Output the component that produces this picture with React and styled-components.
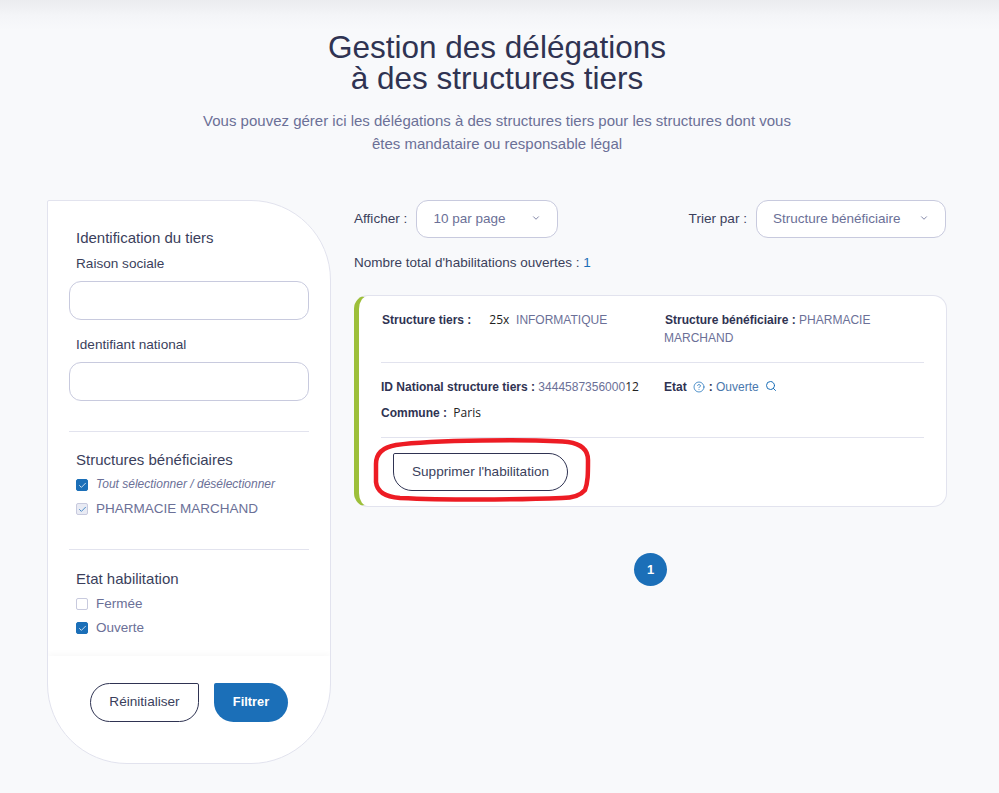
import React from "react"
import styled, { createGlobalStyle } from "styled-components"
import { Check, ChevronDown, CircleHelp, Search } from "lucide-react"

const GlobalStyle = createGlobalStyle`
  html, body {
    margin: 0;
    padding: 0;
    background: #f8f9fb;
  }
  body {
    font-family: "Liberation Sans", Arial, sans-serif;
    color: #2f3352;
  }
  * {
    box-sizing: border-box;
  }
`

const Page = styled.div`
  width: 999px;
  height: 793px;
  overflow: hidden;
  padding-top: 32px;
  background: linear-gradient(#ebecef 0, #f4f5f8 16px, #f8f9fb 30px);
`

const Header = styled.header`
  text-align: center;
  height: 168px;
  padding-right: 5px;
`

const Title = styled.h1`
  margin: 0;
  font-size: 31.5px;
  line-height: 31px;
  font-weight: 400;
  color: #2f3352;
`

const Subtitle = styled.p`
  margin: 15px auto 0;
  width: 620px;
  font-size: 15px;
  line-height: 23px;
  color: #6b7097;
`

const Content = styled.div`
  display: flex;
  align-items: flex-start;
  padding-left: 47px;
  gap: 23px;
`

const Sidebar = styled.aside`
  width: 284px;
  height: 564px;
  background: #fff;
  border: 1px solid #e2e3ee;
  border-radius: 2px 80px 80px 80px;
  display: flex;
  flex-direction: column;
  overflow: hidden;
`

const FilterBody = styled.div`
  flex: 1;
  padding: 28px 21px 0;
`

const FilterSection = styled.section`
  padding-bottom: ${(p) => p.$bottom}px;
  margin-bottom: ${(p) => p.$gap}px;
  border-bottom: ${(p) => (p.$last ? "none" : "1px solid #e2e3ee")};
`

const SectionTitle = styled.div`
  padding-left: 7px;
  margin-bottom: ${(p) => p.$after || 0}px;
  font-size: 15px;
  line-height: 18px;
  color: #3b3f5c;
`

const FieldLabel = styled.label`
  display: block;
  padding-left: 7px;
  margin: ${(p) => p.$top}px 0 8px;
  font-size: 13.6px;
  line-height: 18px;
  color: #3b3f5c;
`

const TextInput = styled.input`
  display: block;
  width: 240px;
  height: 39px;
  border: 1px solid #c8cade;
  border-radius: 12px;
  background: #fff;
  outline: none;
`

const CheckRow = styled.div`
  display: flex;
  align-items: center;
  gap: 8px;
  height: 24px;
  padding-left: 7px;
  font-size: ${(p) => (p.$italic ? "12px" : "13.5px")};
  font-style: ${(p) => (p.$italic ? "italic" : "normal")};
  color: #6b7097;
`

const Box = styled.span`
  width: 12px;
  height: 12px;
  margin-top: 2px;
  border-radius: 2px;
  display: inline-flex;
  align-items: center;
  justify-content: center;
  flex: none;
  background: ${(p) => (p.$state === "on" ? "#1b6fb8" : p.$state === "off" ? "#e9ebf4" : "#fff")};
  border: 1px solid ${(p) => (p.$state === "on" ? "#1b6fb8" : "#c8cade")};
  color: ${(p) => (p.$state === "on" ? "#fff" : "#1b6fb8")};
`

const SidebarFooter = styled.div`
  height: 107px;
  display: flex;
  justify-content: center;
  gap: 15px;
  padding-top: 27px;
  box-shadow: 0 -3px 5px rgba(40, 40, 60, 0.025);
`

const OutlineButton = styled.button`
  height: ${(p) => p.$height}px;
  width: ${(p) => p.$width}px;
  padding: 0 0 2px;
  background: #fff;
  border: 1px solid #2f3352;
  border-radius: ${(p) => p.$radius};
  font: 13.6px "Liberation Sans", Arial, sans-serif;
  color: #3b3f5c;
`

const PrimaryButton = styled.button`
  height: 39px;
  width: 74px;
  padding: 0 0 2px;
  background: #1b6fb8;
  border: none;
  border-radius: 2px 20px 20px 20px;
  font: bold 12.8px "Liberation Sans", Arial, sans-serif;
  color: #fff;
`

const Main = styled.main`
  width: 593px;
`

const Toolbar = styled.div`
  display: flex;
  justify-content: space-between;
  align-items: center;
  padding-right: 1px;
`

const ToolGroup = styled.div`
  display: flex;
  align-items: center;
  gap: 9px;
`

const ToolLabel = styled.span`
  margin-bottom: 2px;
  font-size: 13.6px;
  color: #3b3f5c;
`

const SelectBox = styled.div`
  width: ${(p) => p.$width}px;
  height: 38px;
  padding: 0 16px 2px 16px;
  display: flex;
  align-items: center;
  justify-content: space-between;
  background: #fff;
  border: 1px solid #c8cade;
  border-radius: 12px;
  font-size: 13.5px;
  color: #6b7097;
`

const Total = styled.div`
  margin: 16px 0 23px;
  font-size: 13.5px;
  line-height: 18px;
  color: #3b3f5c;

  b {
    font-weight: 400;
    color: #1b6fb8;
  }
`

const Card = styled.article`
  position: relative;
  height: 212px;
  background: #fff;
  border: 1px solid #e2e3ee;
  border-left: 5px solid #9dbf3a;
  border-radius: 14px;
  padding: 0 22px;
`

const CardRow = styled.div`
  display: grid;
  grid-template-columns: 283px 1fr;
  height: ${(p) => p.$height}px;
  padding-top: ${(p) => p.$top}px;
  border-bottom: 1px solid #e2e3ee;
  font-size: 12px;
  line-height: 18px;
  color: #6b7097;

  strong {
    color: #2f3352;
  }
`

const LeadLabel = styled.strong`
  margin-left: 1px;
`

const InfoLine = styled.div`
  margin-bottom: ${(p) => p.$bottom || 0}px;
`

const Patched = styled.span`
  margin-left: ${(p) => p.$left || 0}px;
  font-family: "Open Sans", sans-serif;
  color: #222;
`

const EtatValue = styled.span`
  color: #4a78ad;
`

const HelpIcon = styled(CircleHelp)`
  vertical-align: -2px;
  margin: 0 4px 0 6px;
  color: #1b6fb8;
`

const SearchIcon = styled(Search)`
  vertical-align: -1px;
  margin-left: 6px;
  color: #1b6fb8;
`

const CardActions = styled.div`
  padding: 15px 0 0 12px;
`

const RedMark = styled.svg`
  position: absolute;
  left: 13px;
  top: 142px;
  pointer-events: none;
`

const Pagination = styled.div`
  display: flex;
  justify-content: center;
  margin-top: 46px;
`

const PageDot = styled.span`
  width: 33px;
  height: 33px;
  border-radius: 50%;
  display: flex;
  align-items: center;
  justify-content: center;
  background: #1b6fb8;
  color: #fff;
  font-size: 13px;
  font-weight: 700;
`

const CheckItem = ({ state, italic, children }) => (
  <CheckRow $italic={italic}>
    <Box $state={state}>
      {state !== "empty" && <Check size={9} strokeWidth={2} />}
    </Box>
    {children}
  </CheckRow>
)

const App = () => {
  return (
    <Page>
      <GlobalStyle />
      <Header>
        <Title>
          Gestion des délégations
          <br />à des structures tiers
        </Title>
        <Subtitle>
          Vous pouvez gérer ici les délégations à des structures tiers pour les structures dont vous
          êtes mandataire ou responsable légal
        </Subtitle>
      </Header>
      <Content>
        <Sidebar>
          <FilterBody>
            <FilterSection $bottom={30} $gap={19}>
              <SectionTitle>Identification du tiers</SectionTitle>
              <FieldLabel $top={8}>Raison sociale</FieldLabel>
              <TextInput />
              <FieldLabel $top={16}>Identifiant national</FieldLabel>
              <TextInput />
            </FilterSection>
            <FilterSection $bottom={29} $gap={20}>
              <SectionTitle $after={3}>Structures bénéficiaires</SectionTitle>
              <CheckItem state="on" italic>Tout sélectionner / désélectionner</CheckItem>
              <CheckItem state="off">PHARMACIE MARCHAND</CheckItem>
            </FilterSection>
            <FilterSection $last $bottom={0} $gap={0}>
              <SectionTitle $after={3}>Etat habilitation</SectionTitle>
              <CheckItem state="empty">Fermée</CheckItem>
              <CheckItem state="on">Ouverte</CheckItem>
            </FilterSection>
          </FilterBody>
          <SidebarFooter>
            <OutlineButton $width={109} $height={39} $radius="20px 2px 20px 20px">
              Réinitialiser
            </OutlineButton>
            <PrimaryButton>Filtrer</PrimaryButton>
          </SidebarFooter>
        </Sidebar>
        <Main>
          <Toolbar>
            <ToolGroup>
              <ToolLabel>Afficher :</ToolLabel>
              <SelectBox $width={142}>
                10 par page
                <ChevronDown size={10} strokeWidth={2} />
              </SelectBox>
            </ToolGroup>
            <ToolGroup>
              <ToolLabel>Trier par :</ToolLabel>
              <SelectBox $width={190}>
                Structure bénéficiaire
                <ChevronDown size={10} strokeWidth={2} />
              </SelectBox>
            </ToolGroup>
          </Toolbar>
          <Total>
            Nombre total d'habilitations ouvertes : <b>1</b>
          </Total>
          <Card>
            <CardRow $height={67} $top={15}>
              <div>
                <LeadLabel>Structure tiers :</LeadLabel>
                <Patched $left={18}>25x</Patched>&nbsp; INFORMATIQUE
              </div>
              <div>
                <LeadLabel>Structure bénéficiaire :</LeadLabel> PHARMACIE MARCHAND
              </div>
            </CardRow>
            <CardRow $height={75} $top={15}>
              <div>
                <InfoLine $bottom={8}>
                  <strong>ID National structure tiers :</strong> 3444587356000<Patched>12</Patched>
                </InfoLine>
                <InfoLine>
                  <strong>Commune :</strong> <Patched $left={3}>Paris</Patched>
                </InfoLine>
              </div>
              <div>
                <strong>Etat</strong>
                <HelpIcon size={12} strokeWidth={1.5} />
                <strong>:</strong> <EtatValue>Ouverte</EtatValue>
                <SearchIcon size={12} strokeWidth={2} />
              </div>
            </CardRow>
            <CardActions>
              <OutlineButton $width={175} $height={38} $radius="2px 20px 20px 20px">
                Supprimer l'habilitation
              </OutlineButton>
            </CardActions>
            <RedMark width={222} height={66} viewBox="0 0 222 66">
              <path
                d="M24 7 C60 2 160 1 196 4 C210 6 216 12 216 22 C216 36 216 44 213 52 C208 58 198 60 190 60 C140 62 70 62 28 60 C14 59 5 54 4 44 L4 26 C4 14 12 9 24 7 Z"
                fill="none"
                stroke="#ed1c24"
                strokeWidth="4.5"
              />
            </RedMark>
          </Card>
          <Pagination>
            <PageDot>1</PageDot>
          </Pagination>
        </Main>
      </Content>
    </Page>
  )
}

export default App
